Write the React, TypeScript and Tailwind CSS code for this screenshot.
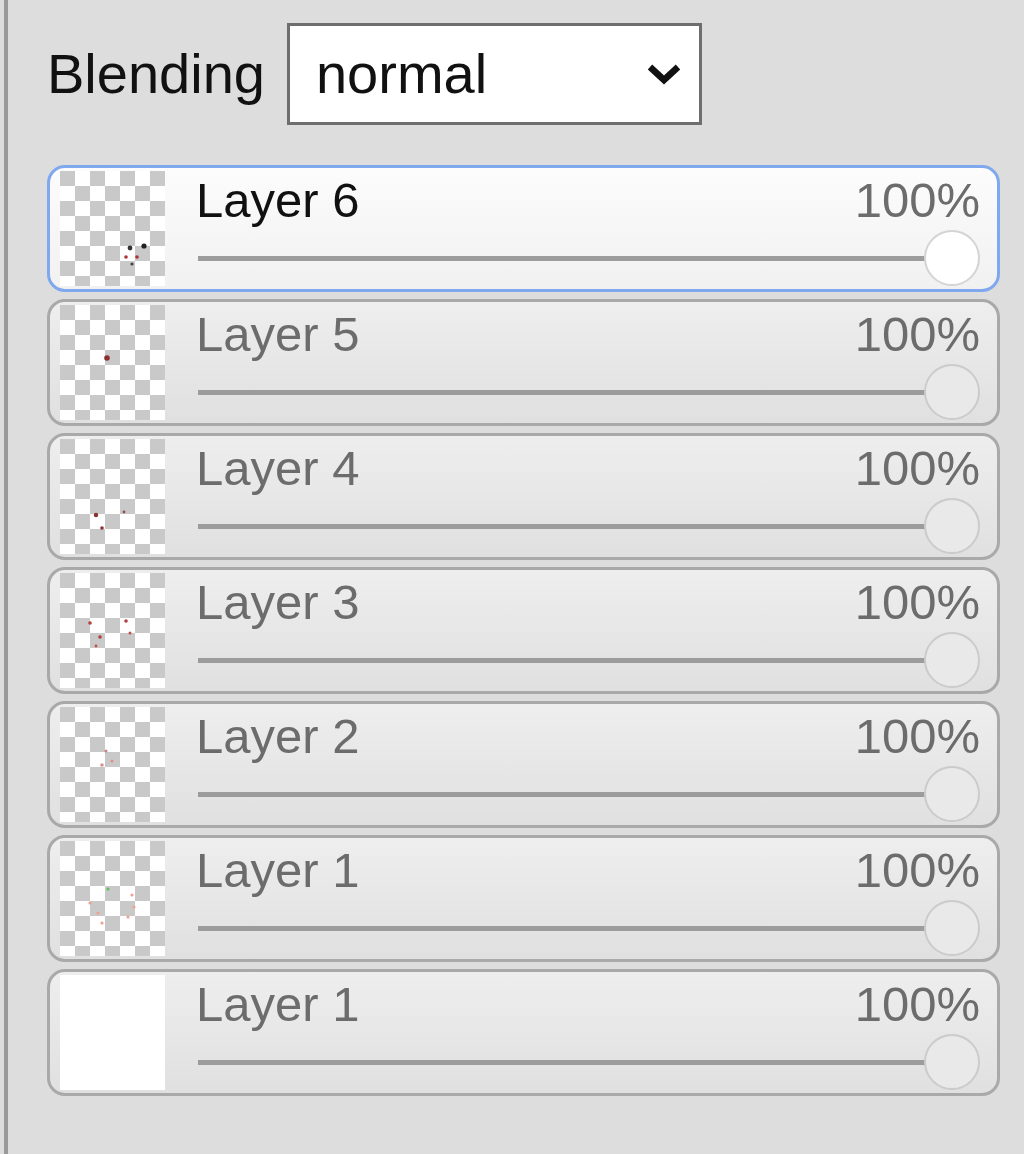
import clsx from 'clsx';

type Layer = {
  name: string;
  opacity: number;
  selected?: boolean;
  solid?: boolean;
  marks: { x: number; y: number; r: number; c: string }[];
};

const layers: Layer[] = [
  {
    name: 'Layer 6',
    opacity: 100,
    selected: true,
    marks: [
      { x: 70, y: 77, r: 2.4, c: '#333' },
      { x: 84, y: 75, r: 2.6, c: '#222' },
      { x: 66, y: 86, r: 1.8, c: '#a33' },
      { x: 77, y: 86, r: 1.8, c: '#a33' },
      { x: 72, y: 93, r: 1.6, c: '#444' },
    ],
  },
  { name: 'Layer 5', opacity: 100, marks: [{ x: 47, y: 53, r: 2.8, c: '#8a3030' }] },
  {
    name: 'Layer 4',
    opacity: 100,
    marks: [
      { x: 36, y: 76, r: 2.2, c: '#8a3030' },
      { x: 42, y: 89, r: 1.8, c: '#8a3030' },
      { x: 64, y: 73, r: 1.4, c: '#9a4a4a' },
    ],
  },
  {
    name: 'Layer 3',
    opacity: 100,
    marks: [
      { x: 30, y: 50, r: 1.8, c: '#b04040' },
      { x: 40, y: 64, r: 1.8, c: '#b04040' },
      { x: 66, y: 48, r: 1.8, c: '#b04040' },
      { x: 70, y: 60, r: 1.5, c: '#c05050' },
      { x: 36, y: 73, r: 1.4, c: '#c05050' },
    ],
  },
  {
    name: 'Layer 2',
    opacity: 100,
    marks: [
      { x: 46, y: 44, r: 1.5, c: '#d08080' },
      { x: 42, y: 58, r: 1.8, c: '#e09090' },
      { x: 52, y: 54, r: 1.5, c: '#e09090' },
    ],
  },
  {
    name: 'Layer 1',
    opacity: 100,
    marks: [
      { x: 48, y: 48, r: 1.6, c: '#60c060' },
      { x: 30, y: 62, r: 1.6, c: '#f0a090' },
      { x: 38, y: 72, r: 1.6, c: '#f0a090' },
      { x: 42, y: 82, r: 1.6, c: '#f0a090' },
      { x: 72, y: 54, r: 1.6, c: '#f0a090' },
      { x: 74, y: 66, r: 1.6, c: '#f0a090' },
      { x: 68, y: 76, r: 1.6, c: '#f0a090' },
    ],
  },
  { name: 'Layer 1', opacity: 100, solid: true, marks: [] },
];

function Thumb({ layer, id }: { layer: Layer; id: string }) {
  if (layer.solid) {
    return <div className="h-[115px] w-[105px] shrink-0 bg-white" />;
  }
  return (
    <div className="h-[115px] w-[105px] shrink-0 bg-white">
      <svg width="105" height="115" viewBox="0 0 105 115">
        <defs>
          <pattern id={id} width="30" height="30" patternUnits="userSpaceOnUse">
            <rect width="30" height="30" fill="#fff" />
            <rect x="0" y="0" width="15" height="15" fill="#c9c9c9" />
            <rect x="15" y="15" width="15" height="15" fill="#c9c9c9" />
          </pattern>
        </defs>
        <rect width="105" height="115" fill={`url(#${id})`} />
        {layer.marks.map((m, i) => (
          <circle key={i} cx={m.x} cy={m.y} r={m.r} fill={m.c} />
        ))}
      </svg>
    </div>
  );
}

function LayerRow({ layer, index }: { layer: Layer; index: number }) {
  return (
    <div
      className={clsx(
        'flex h-[127px] items-center rounded-[18px] border-[3px] pl-[10px] pr-[17px]',
        layer.selected
          ? 'border-[#7fa8ee] bg-linear-to-b from-[#fcfcfc] to-[#f1f1f1]'
          : 'border-[#a9a9a9] bg-linear-to-b from-[#eeeeee] to-[#e0e0e0]'
      )}
    >
      <Thumb layer={layer} id={`checker-${index}`} />
      <div className="ml-[31px] flex h-[115px] flex-1 flex-col">
        <div className="flex h-[56px] items-center justify-between pt-[2px] text-[49px] leading-[56px]">
          <span className={layer.selected ? 'text-[#111]' : 'text-[#6c6c6c]'}>{layer.name}</span>
          <span className="text-[#6c6c6c]">{layer.opacity}%</span>
        </div>
        {/* slider */}
        <div className="relative mt-[3px] flex h-[56px] items-center">
          <div className="ml-[2px] mr-[40px] h-[5px] flex-1 bg-[#9c9c9c]" />
          <div
            className={clsx(
              'absolute right-0 top-0 h-[56px] w-[56px] rounded-full border-2',
              layer.selected ? 'border-[#d4d4d4] bg-white' : 'border-[#cbcbcb] bg-[#e9e9e9]'
            )}
          />
        </div>
      </div>
    </div>
  );
}

export default function App() {
  return (
    <div className="h-[1154px] w-[1024px] bg-[#dddddd] pl-1 font-['Liberation_Sans',Arial,sans-serif]">
      <div className="h-full border-l-4 border-[#9a9a9a] pl-[39px] pr-[24px] pt-[23px]">
        <div className="flex items-center">
          <span className="text-[56px] leading-none text-[#111]">Blending</span>
          <div className="ml-[22px] flex h-[102px] w-[415px] items-center justify-between border-[3px] border-[#6e6e6e] bg-white pl-[26px] pr-[17px]">
            <span className="text-[56px] leading-none text-[#111]">normal</span>
            <svg width="36" height="22" viewBox="0 0 36 22">
              <polyline points="4,4 18,17 32,4" fill="none" stroke="#111" strokeWidth="6.5" />
            </svg>
          </div>
        </div>

        <div className="mt-[40px] flex flex-col gap-[7px]">
          {layers.map((layer, i) => (
            <LayerRow key={i} layer={layer} index={i} />
          ))}
        </div>
      </div>
    </div>
  );
}
